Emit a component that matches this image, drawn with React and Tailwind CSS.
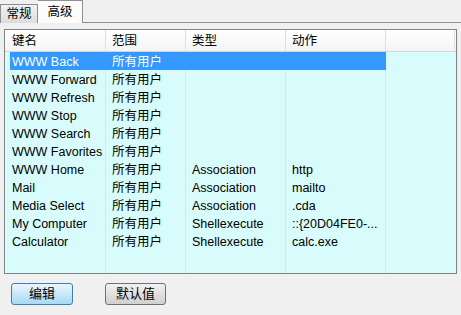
const ROWS = [
  ["WWW Back", "所有用户", "", ""],
  ["WWW Forward", "所有用户", "", ""],
  ["WWW Refresh", "所有用户", "", ""],
  ["WWW Stop", "所有用户", "", ""],
  ["WWW Search", "所有用户", "", ""],
  ["WWW Favorites", "所有用户", "", ""],
  ["WWW Home", "所有用户", "Association", "http"],
  ["Mail", "所有用户", "Association", "mailto"],
  ["Media Select", "所有用户", "Association", ".cda"],
  ["My Computer", "所有用户", "Shellexecute", "::{20D04FE0-..."],
  ["Calculator", "所有用户", "Shellexecute", "calc.exe"],
];

const HEADERS = ["键名", "范围", "类型", "动作"];
const WIDTHS = ["w-[96px]", "w-[80px]", "w-[100px]", "w-[100px]"];

export default function App() {
  return (
    <div
      className="w-[461px] h-[315px] bg-[#f0f0f0] text-[12.5px] text-black overflow-hidden"
      style={{ fontFamily: '"Liberation Sans", "Noto Sans CJK SC", sans-serif' }}
    >
      {/* Tabs */}
      <div className="flex items-end h-[23px]">
        <div className="w-[38px] h-[19px] border border-b-0 border-[#8e8f8f] bg-gradient-to-b from-[#f2f2f2] to-[#dcdcdc] flex items-center justify-center pt-[1px]">
          常规
        </div>
        <div className="w-[45px] h-[23px] border border-b-0 border-l-0 border-[#8e8f8f] bg-[#fcfcfc] flex items-center justify-center">
          高级
        </div>
        <div className="flex-1 h-full border-b border-[#8e8f8f]" />
      </div>

      {/* List */}
      <div className="px-[4px] pt-[6px]">
        <div className="h-[245px] border border-[#7f8489] bg-[#d8fcfc] flex flex-col">
          <div className="flex h-[22px] bg-gradient-to-b from-white to-[#f4f4f4] border-b border-[#d5d5d5] pl-[5px]">
            {HEADERS.map((h, i) => (
              <div
                key={h}
                className={`${WIDTHS[i]} border-r border-[#dedede] flex items-center pt-[2px] ${i === 0 ? "pl-[2px]" : "pl-[6px]"}`}
              >
                {h}
              </div>
            ))}
            <div className="flex-1 border-r border-[#dedede] mr-[1px]" />
          </div>
          {ROWS.map((r, ri) => (
            <div key={r[0]} className="flex h-[18px] pl-[5px]">
              {r.map((c, ci) => (
                <div
                  key={ci}
                  className={`${WIDTHS[ci]} flex items-center pt-[2px] whitespace-nowrap overflow-hidden ${ci === 0 ? "pl-[2px]" : "pl-[6px]"} ${
                    ri === 0 ? "bg-[#3399ff] text-white" : "border-r border-[#c9eeee]"
                  }`}
                >
                  {c}
                </div>
              ))}
              <div className="flex-1" />
            </div>
          ))}
          <div className="flex flex-1 pl-[5px]">
            {WIDTHS.map((w, i) => (
              <div key={i} className={`${w} border-r border-[#c9eeee]`} />
            ))}
          </div>
        </div>
      </div>

      {/* Buttons */}
      <div className="flex gap-[32px] pl-[11px] pt-[9px]">
        <button className="w-[62px] h-[22px] rounded-[3px] border border-[#3c7fb1] bg-gradient-to-b from-[#eaf6fd] to-[#a7d9f5] flex items-center justify-center text-[13px]">
          编辑
        </button>
        <button className="w-[61px] h-[22px] rounded-[3px] border border-[#707070] bg-gradient-to-b from-[#f2f2f2] to-[#d0d0d0] flex items-center justify-center text-[13px]">
          默认值
        </button>
      </div>
    </div>
  );
}
